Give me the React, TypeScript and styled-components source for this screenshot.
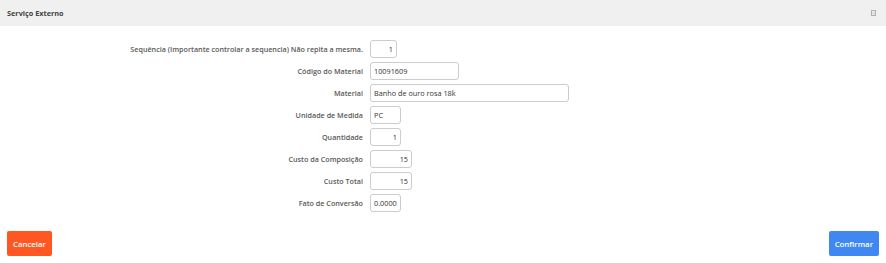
import React from 'react'
import styled, { createGlobalStyle } from 'styled-components'

const GlobalStyle = createGlobalStyle`
    html, body {
        margin: 0;
        padding: 0;
        background: #ffffff;
        font-family: "Open Sans", "Liberation Sans", sans-serif;
    }
`

const Panel = styled.div`
    width: 886px;
    height: 263px;
    display: flex;
    flex-direction: column;
    background: #fff;
`

const Header = styled.div`
    height: 26px;
    background: #f0f0f0;
    display: flex;
    align-items: center;
    justify-content: space-between;
    padding: 0 10px 0 7px;
    box-sizing: border-box;
`

const Title = styled.span`
    font-size: 7.3px;
    font-weight: 700;
    color: #444;
`

const Form = styled.div`
    display: grid;
    grid-template-columns: 363px auto;
    column-gap: 7px;
    row-gap: 4px;
    padding-top: 14px;
    align-items: center;
    justify-items: start;
`

const Label = styled.label`
    justify-self: end;
    font-size: 7.2px;
    font-weight: 600;
    color: #595959;
    white-space: nowrap;
`

const Input = styled.input<{ $w: number; $right?: boolean }>`
    width: ${p => p.$w}px;
    height: 18px;
    box-sizing: border-box;
    border: 1px solid #cccccc;
    border-radius: 3px;
    padding: 0 3px;
    font-family: "Open Sans", "Liberation Sans", sans-serif;
    font-size: 7.3px;
    color: #333;
    text-align: ${p => (p.$right ? 'right' : 'left')};
    outline: none;
    background: #fff;
`

const Footer = styled.div`
    display: flex;
    justify-content: space-between;
    padding: 19px 7px 0 7px;
`

const Button = styled.button<{ $color: string }>`
    height: 25px;
    padding: 0 6px;
    border: none;
    border-radius: 2px;
    background: ${p => p.$color};
    color: #fff;
    font-family: "Open Sans", "Liberation Sans", sans-serif;
    font-size: 7.8px;
    font-weight: 600;
`

const fields = [
    { label: 'Sequência (Importante controlar a sequencia) Não repita a mesma.', value: '1', w: 27, right: true },
    { label: 'Código do Material', value: '10091609', w: 89 },
    { label: 'Material', value: 'Banho de ouro rosa 18k', w: 199 },
    { label: 'Unidade de Medida', value: 'PC', w: 31 },
    { label: 'Quantidade', value: '1', w: 31, right: true },
    { label: 'Custo da Composição', value: '15', w: 42, right: true },
    { label: 'Custo Total', value: '15', w: 42, right: true },
    { label: 'Fato de Conversão', value: '0.0000', w: 31 },
]

function RestoreIcon() {
    return (
        <svg width="5" height="6" viewBox="0 0 5 6">
            <rect x="0.5" y="0.5" width="4" height="5" fill="none" stroke="#b0b0b0" strokeWidth="1" />
            <rect x="1.5" y="2" width="2" height="2.5" fill="#d8d8d8" />
        </svg>
    )
}

export default function App() {
    return (
        <Panel>
            <GlobalStyle />
            <Header>
                <Title>Serviço Externo</Title>
                <RestoreIcon />
            </Header>
            <Form>
                {fields.map(f => (
                    <React.Fragment key={f.label}>
                        <Label>{f.label}</Label>
                        <Input $w={f.w} $right={f.right} defaultValue={f.value} />
                    </React.Fragment>
                ))}
            </Form>
            <Footer>
                <Button $color="#ff5722">Cancelar</Button>
                <Button $color="#3f88f2">Confirmar</Button>
            </Footer>
        </Panel>
    )
}
